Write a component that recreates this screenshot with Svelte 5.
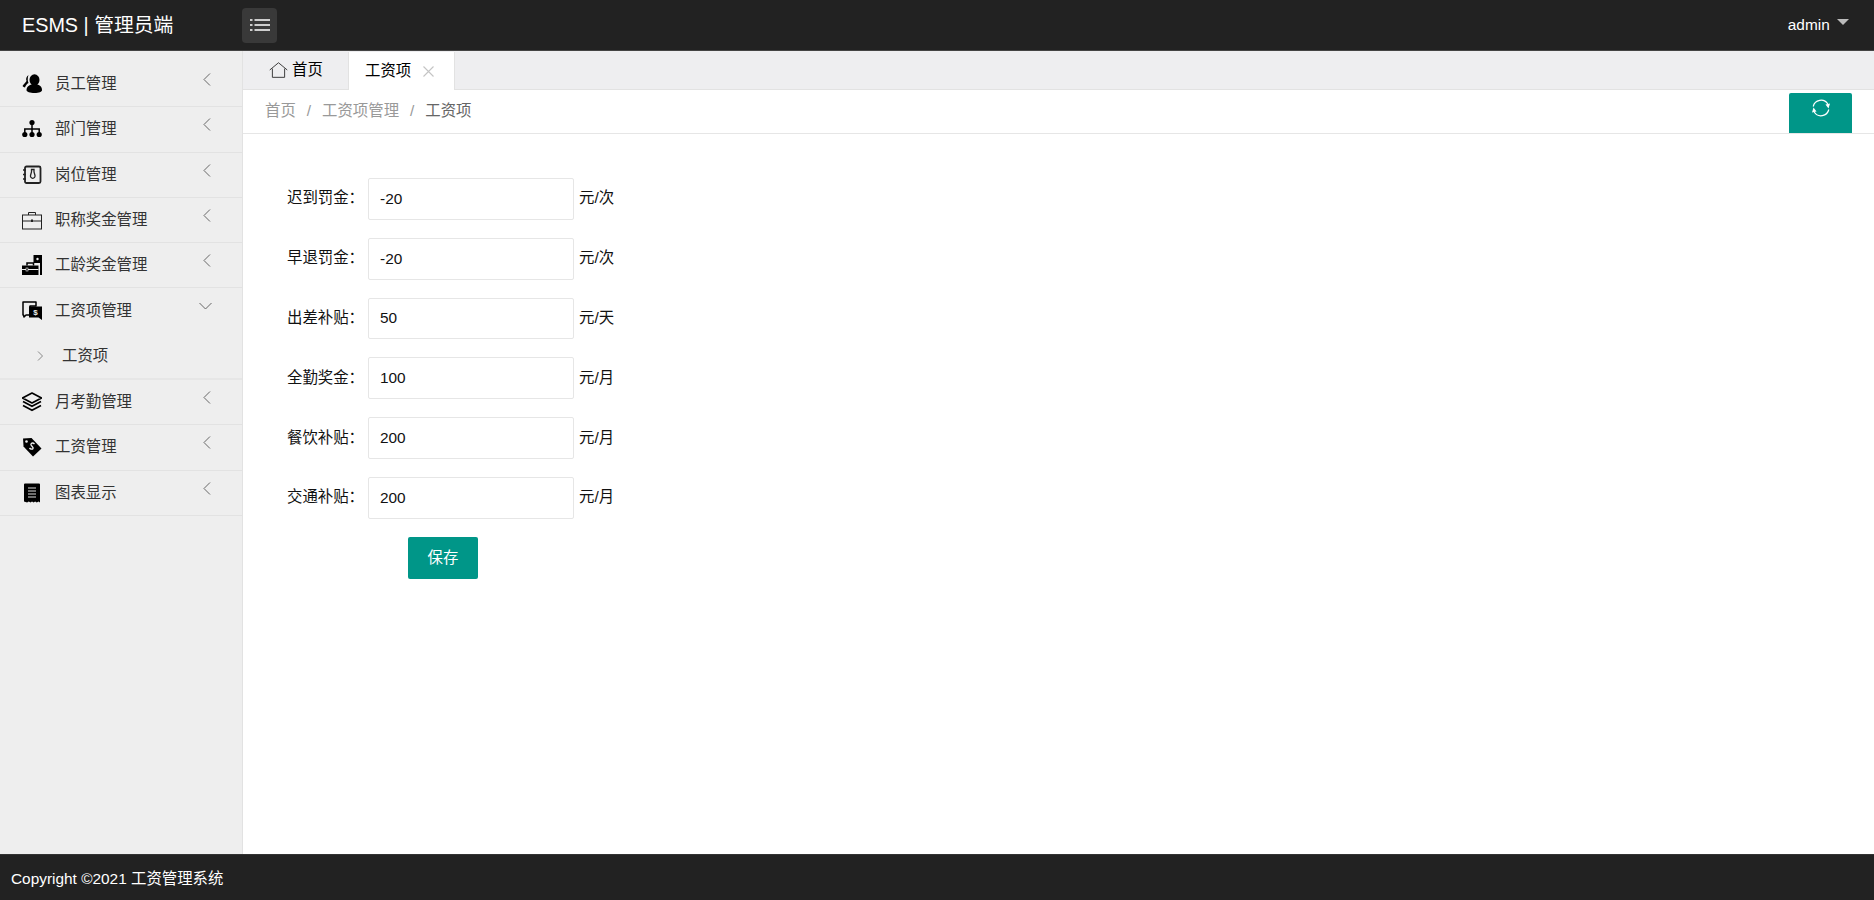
<script lang="ts">
  const menuTop = [
    { name: "员工管理", icon: "users" },
    { name: "部门管理", icon: "tree" },
    { name: "岗位管理", icon: "book" },
    { name: "职称奖金管理", icon: "case" },
    { name: "工龄奖金管理", icon: "caseSolid" },
  ];
  const menuBottom = [
    { name: "月考勤管理", icon: "layers" },
    { name: "工资管理", icon: "tag" },
    { name: "图表显示", icon: "receipt" },
  ];
  const fields = [
    { label: "迟到罚金：", value: "-20", unit: "元/次" },
    { label: "早退罚金：", value: "-20", unit: "元/次" },
    { label: "出差补贴：", value: "50", unit: "元/天" },
    { label: "全勤奖金：", value: "100", unit: "元/月" },
    { label: "餐饮补贴：", value: "200", unit: "元/月" },
    { label: "交通补贴：", value: "200", unit: "元/月" },
  ];
</script>

{#snippet icon(name)}
  <svg class="menu-icon" viewBox="0 0 20 20" aria-hidden="true">
    {#if name === "users"}
      <ellipse cx="12.5" cy="6" rx="5" ry="5.8" fill="#000" />
      <path d="M4.500 16c0-3.500 3.500-6 8-6s7.500 2.500 7.500 6c0 1.800-3 3-7.500 3s-8-1.200-8-3z" fill="#000" />
      <path d="M6.500 1C4.500 2.500 3.500 4.500 4.500 7 3.500 9 1.500 10 .5 12c.7.800 1.500 1.200 2.500 1.500.5-1.800 1.800-3.500 3.500-4.500C5.500 7 5.500 3.500 6.500 1z" fill="#000" />
    {:else if name === "tree"}
      <circle cx="10" cy="3.500" r="2.600" fill="#000" />
      <circle cx="2.800" cy="15.500" r="2.600" fill="#000" />
      <circle cx="10" cy="15.500" r="2.600" fill="#000" />
      <circle cx="17.200" cy="15.500" r="2.600" fill="#000" />
      <path d="M10 5v10M2.800 15v-5h14.400v5" fill="none" stroke="#000" stroke-width="1.500" />
    {:else if name === "book"}
      <rect x="3" y="1.500" width="15.500" height="16.500" rx="1.500" fill="none" stroke="#222" stroke-width="1.800" />
      <path d="M1 5h3M1 9.500h3M1 14h3" stroke="#222" stroke-width="1.500" />
      <path d="M9.500 4.500h2.500v2.500l1 3.500a2.300 2.300 0 1 1-4.500 0l1-3.500z" fill="none" stroke="#222" stroke-width="1.300" />
    {:else if name === "case"}
      <rect x=".5" y="5" width="19" height="14" fill="none" stroke="#222" stroke-width="1" />
      <path d="M6.500 5V2.500h7V5M.5 11h19" fill="none" stroke="#222" stroke-width="1" />
      <rect x="9" y="9.500" width="2" height="2.500" fill="#222" />
    {:else if name === "caseSolid"}
      <path d="M11.500 0H20v20h-2V8h-6.500z" fill="#000" />
      <circle cx="15.500" cy="4" r="1.200" fill="#eee" />
      <path d="M0 10.500h16.500V20H0z" fill="#000" />
      <path d="M5 10.500V8h6.500v2.500" fill="none" stroke="#000" stroke-width="1.500" />
      <path d="M0 14.500h16.500" stroke="#eee" stroke-width="1" />
      <rect x="4" y="13" width="2" height="3" fill="#000" stroke="#eee" stroke-width=".6" />
    {:else if name === "money"}
      <path d="M1 1h13v4H8v9H4l-2 2-.500-2H1z" fill="none" stroke="#000" stroke-width="1.500" stroke-linejoin="round" />
      <path d="M7 5.500h13V19l-3.500-2.500H7z" fill="#000" />
      <text x="13.500" y="14.300" class="dollar">$</text>
    {:else if name === "layers"}
      <path d="M10 1 19.500 6 10 11 .5 6z" fill="none" stroke="#000" stroke-width="1.700" stroke-linejoin="round" />
      <path d="M1 9.500 10 14.300l9-4.800M1 13.500l9 4.800 9-4.800" fill="none" stroke="#000" stroke-width="1.700" stroke-linejoin="round" />
    {:else if name === "tag"}
      <path d="M1 1.500 9.500 1 19.500 11.500 11 19.500 1.500 9.500z" fill="#000" />
      <path d="M12.500 7c-1.500-1.500-3-1-3.500 0-1 1.500 3 3 2 4.500-.7 1-2.500.800-3.500-.5" fill="none" stroke="#eee" stroke-width="1.400" />
      <circle cx="4.500" cy="4.500" r="1.300" fill="#eee" />
    {:else if name === "receipt"}
      <path d="M3 .5h14a1 1 0 0 1 1 1V19.500l-1.500-1-1.700 1-1.700-1-1.500 1-1.600-1-1.500 1-1.700-1-1.700 1L2 18.500V1.500a1 1 0 0 1 1-1z" fill="#000" />
      <path d="M6 5h8M6 8h8M6 11h8M6 14h8" stroke="#ddd" stroke-width="1.200" />
    {/if}
  </svg>
{/snippet}

{#snippet chevronLeft()}
  <svg class="chev-left" viewBox="0 0 8 13" aria-hidden="true"><path d="M7 .5 1 6.500l6 6" /></svg>
{/snippet}

<div class="page">
  <header class="topbar">
    <div class="logo">ESMS | 管理员端</div>
    <button class="nav-toggle" aria-label="菜单">
      <svg viewBox="0 0 20 12" width="20" height="12">
        <path d="M0 1h2.500M4.500 1H20M0 6h2.500M4.500 6H20M0 11h2.500M4.500 11H20" stroke="#fff" stroke-width="1.300" />
      </svg>
    </button>
    <div class="user">admin <span class="caret"></span></div>
  </header>

  <div class="middle">
    <aside class="sidebar">
      <ul class="menu">
        {#each menuTop as item}
          <li class="menu-item">
            {@render icon(item.icon)}
            <span class="menu-name">{item.name}</span>
            {@render chevronLeft()}
          </li>
        {/each}
        <li class="menu-group">
          <div class="menu-item open">
            {@render icon("money")}
            <span class="menu-name">工资项管理</span>
            <svg class="chev-down" viewBox="0 0 13 8" aria-hidden="true"><path d="M.5 1l6 6 6-6" /></svg>
          </div>
          <div class="sub-item">
            <svg class="chev-right" viewBox="0 0 6 10" aria-hidden="true"><path d="M1 .5 5.500 5 1 9.500" /></svg>
            <span class="sub-name">工资项</span>
          </div>
        </li>
        {#each menuBottom as item}
          <li class="menu-item">
            {@render icon(item.icon)}
            <span class="menu-name">{item.name}</span>
            {@render chevronLeft()}
          </li>
        {/each}
      </ul>
    </aside>

    <main class="content">
      <div class="tabs">
        <div class="tab home">
          <svg viewBox="0 0 20 17" width="19" height="16" aria-hidden="true">
            <path d="M.7 8.500 10 .8l9.300 7.700M3.500 7v9.300h13V7" fill="none" stroke="#333" stroke-width="1" />
          </svg>
          <span class="tab-name">首页</span>
        </div>
        <div class="tab active">
          <span class="tab-name">工资项</span>
          <svg class="close" viewBox="0 0 11 11" width="11" height="11" aria-hidden="true">
            <path d="M.5.5l10 10M10.500.5l-10 10" stroke="#c4c4c4" stroke-width="1.100" />
          </svg>
        </div>
      </div>

      <div class="crumbbar">
        <nav class="crumbs">
          <span>首页</span><i>/</i><span>工资项管理</span><i>/</i><span class="last">工资项</span>
        </nav>
        <button class="refresh" aria-label="刷新">
          <svg viewBox="0 0 20 20" width="20" height="20">
            <path d="M2.200 8.500A8 8 0 0 1 16.800 6M17.800 11.500A8 8 0 0 1 3.200 14" fill="none" stroke="#fff" stroke-width="1.200" />
            <path d="M14.500 6.500 19 5.500 17.500 10.500zM5.500 13.500 1 14.500 2.500 9.500z" fill="#fff" />
          </svg>
        </button>
      </div>

      <form class="form">
        {#each fields as f}
          <div class="row">
            <span class="label">{f.label}</span>
            <input class="input" value={f.value} />
            <span class="unit">{f.unit}</span>
          </div>
        {/each}
        <button type="button" class="save">保存</button>
      </form>
    </main>
  </div>

  <footer class="footer"><span class="footer-text">Copyright ©2021 工资管理系统</span></footer>
</div>

<style>
  :global(body) {
    margin: 0;
    font-family: "Liberation Sans", "Noto Sans CJK SC", sans-serif;
    font-size: 15.4px;
    color: #000;
  }
  ul {
    list-style: none;
    margin: 0;
    padding: 0;
  }
  button {
    font: inherit;
    border: 0;
    cursor: pointer;
  }

  .page {
    display: flex;
    flex-direction: column;
    height: 100vh;
    overflow: hidden;
  }

  .topbar {
    flex: none;
    height: 50px;
    display: flex;
    align-items: center;
    background: #222;
    border-bottom: 1px solid #444;
    color: #fff;
  }
  .logo {
    width: 242px;
    box-sizing: border-box;
    padding: 0 0 3px 22px;
    font-size: 19.8px;
  }
  .nav-toggle {
    width: 35px;
    height: 35px;
    padding: 0;
    display: flex;
    align-items: center;
    justify-content: center;
    background: #393939;
    border-radius: 4px;
  }
  .user {
    margin-left: auto;
    margin-right: 25px;
    padding-bottom: 1px;
  }
  .caret {
    display: inline-block;
    width: 0;
    height: 0;
    margin-left: 3px;
    border-left: 6px solid transparent;
    border-right: 6px solid transparent;
    border-top: 6px solid #bbb;
    vertical-align: 5px;
  }

  .middle {
    flex: 1;
    display: flex;
    min-height: 0;
  }

  .sidebar {
    flex: none;
    width: 242px;
    background: #eee;
    border-right: 1px solid #e2e2e2;
    padding-top: 11px;
  }
  .menu-item {
    position: relative;
    height: 45.25px;
    box-sizing: border-box;
    display: flex;
    align-items: center;
    padding-left: 22px;
    color: #333;
    border-bottom: 1px solid #e2e2e2;
  }
  .menu-item.open {
    border-bottom: 0;
  }
  .menu-icon {
    width: 20px;
    height: 20px;
    flex: none;
  }
  .dollar {
    font-size: 8px;
    font-weight: bold;
    fill: #eee;
    text-anchor: middle;
  }
  .menu-name {
    margin-left: 13px;
    padding-bottom: 4px;
  }
  .chev-left,
  .chev-down {
    position: absolute;
    fill: none;
    stroke: #666;
    stroke-width: 1;
  }
  .chev-left {
    right: 31px;
    top: 11px;
    width: 8px;
    height: 13px;
  }
  .chev-down {
    right: 30px;
    top: 14px;
    width: 13px;
    height: 8px;
  }
  .menu-group {
    border-bottom: 2px solid #e6e6e6;
  }
  .sub-item {
    height: 44.5px;
    display: flex;
    align-items: center;
    padding-left: 37px;
    color: #333;
  }
  .sub-name {
    padding-bottom: 4px;
  }
  .chev-right {
    width: 6px;
    height: 10px;
    margin-right: 19px;
    fill: none;
    stroke: #888;
    stroke-width: 1;
  }

  .content {
    flex: 1;
    min-width: 0;
    display: flex;
    flex-direction: column;
    background: #fff;
  }

  .tabs {
    flex: none;
    height: 39px;
    display: flex;
    background: #eeeef0;
    border-bottom: 1px solid #e2e2e2;
    box-sizing: border-box;
  }
  .tab {
    display: flex;
    align-items: center;
  }
  .tab-name {
    padding-bottom: 4px;
  }
  .tab.home {
    width: 105px;
    box-sizing: border-box;
    padding-left: 26px;
    gap: 4px;
  }
  .tab.active {
    width: 107px;
    box-sizing: border-box;
    height: 38px;
    margin-top: 1px;
    padding-left: 16px;
    background: #fff;
    border-right: 1px solid #e2e2e2;
    border-left: 1px solid #e2e2e2;
    gap: 12px;
  }

  .crumbbar {
    flex: none;
    height: 44px;
    box-sizing: border-box;
    display: flex;
    justify-content: space-between;
    border-bottom: 1px solid #e6e6e6;
  }
  .crumbs {
    padding: 8px 0 0 22px;
    color: #999;
  }
  .crumbs i {
    font-style: normal;
    margin: 0 11px;
  }
  .crumbs .last {
    color: #666;
  }
  .refresh {
    width: 63px;
    height: 40px;
    margin: 3px 22px 0 0;
    padding: 0 0 10px;
    background: #009688;
    border-radius: 2px 2px 0 0;
    display: flex;
    align-items: center;
    justify-content: center;
  }

  .form {
    padding: 44px 0 0 0;
    display: flex;
    flex-direction: column;
    gap: 18px;
    align-items: flex-start;
  }
  .row {
    display: flex;
    align-items: center;
  }
  .label {
    width: 125px;
    box-sizing: border-box;
    padding: 0 0 5px 44px;
    white-space: nowrap;
    color: #111;
  }
  .input {
    width: 206px;
    height: 41.8px;
    box-sizing: border-box;
    padding: 0 11px;
    border: 1px solid #e6e6e6;
    border-radius: 2px;
    font: inherit;
    color: #111;
    outline: none;
  }
  .unit {
    margin-left: 5px;
    padding-bottom: 5px;
    color: #111;
  }
  .save {
    margin-left: 165px;
    width: 70px;
    height: 42px;
    padding: 0 0 4px;
    background: #009688;
    color: #fff;
    border-radius: 2px;
  }

  .footer {
    flex: none;
    height: 46px;
    box-sizing: border-box;
    display: flex;
    align-items: center;
    padding-left: 11px;
    background: #222;
    border-top: 1px solid #333;
    color: #fff;
  }
  .footer-text {
    padding-bottom: 2px;
  }
</style>
